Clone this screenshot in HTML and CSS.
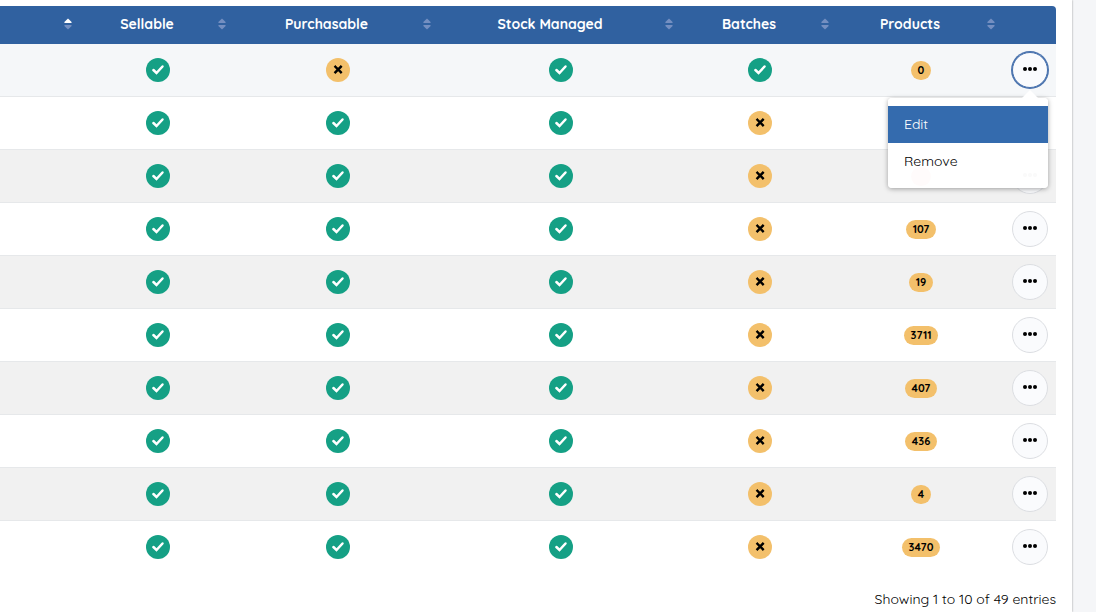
FILE: index.html
```html
<!DOCTYPE html>
<html lang="en">
  <head>
    <meta charset="UTF-8" />
    <meta name="viewport" content="width=device-width, initial-scale=1.0" />
    <title>Product Types</title>
    <link rel="stylesheet" href="styles.css">
  </head>
  <body>
    <!-- Icons shared by the table -->
    <svg class="icons" aria-hidden="true">
      <symbol id="check" viewBox="0 0 24 24">
        <path d="M7.4 12l3.1 3 6-6.5" fill="none" stroke="currentColor" stroke-width="2.5" stroke-linecap="round" />
      </symbol>
      <symbol id="cross" viewBox="0 0 24 24">
        <path d="M9.4 8.8l5.4 5.4M14.8 8.8l-5.4 5.4" fill="none" stroke="currentColor" stroke-width="2.4" stroke-linecap="square" />
      </symbol>
      <symbol id="dots" viewBox="0 0 14 4">
        <circle cx="2" cy="2" r="2" />
        <circle cx="7" cy="2" r="2" />
        <circle cx="12" cy="2" r="2" />
      </symbol>
      <symbol id="sort" viewBox="0 0 8 12">
        <path d="M4 .5L7.6 4q.4 1-.6 1H1Q0 5 .4 4z" />
        <path d="M4 11.5L.4 8Q0 7 1 7h6q1 0 .6 1z" />
      </symbol>
    </svg>

    <main class="panel">
      <table class="types">
        <colgroup>
          <col>
          <col class="col-sellable">
          <col class="col-purchasable">
          <col class="col-stock">
          <col class="col-batches">
          <col class="col-products">
          <col class="col-actions">
        </colgroup>
        <thead>
          <tr>
            <th aria-sort="ascending">
              <button class="sort" type="button" aria-label="Name">
                <span class="sort-label"></span>
                <svg class="sort-icon" viewBox="0 0 8 12">
                  <path class="sorted" d="M4 .5L7.6 4q.4 1-.6 1H1Q0 5 .4 4z" />
                  <path d="M4 11.5L.4 8Q0 7 1 7h6q1 0 .6 1z" />
                </svg>
              </button>
            </th>
            <th><button class="sort" type="button"><span class="sort-label">Sellable</span><svg class="sort-icon"><use href="#sort" /></svg></button></th>
            <th><button class="sort" type="button"><span class="sort-label">Purchasable</span><svg class="sort-icon"><use href="#sort" /></svg></button></th>
            <th><button class="sort" type="button"><span class="sort-label">Stock Managed</span><svg class="sort-icon"><use href="#sort" /></svg></button></th>
            <th><button class="sort" type="button"><span class="sort-label">Batches</span><svg class="sort-icon"><use href="#sort" /></svg></button></th>
            <th><button class="sort" type="button"><span class="sort-label">Products</span><svg class="sort-icon"><use href="#sort" /></svg></button></th>
            <th></th>
          </tr>
        </thead>
        <tbody id="typeRows"></tbody>
      </table>
      <p class="info">Showing 1 to 10 of 49 entries</p>
    </main>

    <script>
      // sellable, purchasable, stock managed, batches, products
      const types = [
        { flags: [true, false, true, true], products: "0", open: true },
        { flags: [true, true, true, false], products: null },
        { flags: [true, true, true, false], products: "", danger: true },
        { flags: [true, true, true, false], products: "107" },
        { flags: [true, true, true, false], products: "19" },
        { flags: [true, true, true, false], products: "3711" },
        { flags: [true, true, true, false], products: "407" },
        { flags: [true, true, true, false], products: "436" },
        { flags: [true, true, true, false], products: "4" },
        { flags: [true, true, true, false], products: "3470" },
      ];

      const flagCell = (on) =>
        `<td><svg class="flag ${on ? "yes" : "no"}"><use href="#${on ? "check" : "cross"}" /></svg></td>`;

      const menu = `
        <div class="menu" role="menu">
          <button class="menu-item active" type="button" role="menuitem">Edit</button>
          <button class="menu-item" type="button" role="menuitem">Remove</button>
        </div>`;

      // Build the table rows
      document.getElementById("typeRows").innerHTML = types
        .map((type) => {
          const badge =
            type.products === null
              ? ""
              : `<span class="badge ${type.danger ? "danger" : ""}">${type.products}</span>`;
          return `
            <tr class="${type.open ? "selected" : ""}">
              <td></td>
              ${type.flags.map(flagCell).join("")}
              <td>${badge}</td>
              <td>
                <div class="actions">
                  <button class="more ${type.open ? "open" : ""}" type="button" aria-label="Actions"><svg class="dots"><use href="#dots" /></svg></button>
                  ${type.open ? menu : ""}
                </div>
              </td>
            </tr>`;
        })
        .join("");
    </script>
  </body>
</html>
```
FILE: styles.css
```css
* {
  box-sizing: border-box;
}
body {
  margin: 0;
  padding-right: 24px;
  background-color: #f5f6f8;
  color: #000;
  font-family: Quicksand, Lato, sans-serif;
  font-size: 14px;
}
button {
  font: inherit;
  color: inherit;
  border: none;
  cursor: pointer;
}
.icons {
  display: none;
}
.panel {
  min-height: 100vh;
  padding: 6px 16px 0 0;
  background-color: #fff;
  box-shadow: 0 0 2px rgba(0, 0, 0, 0.4);
}

/* Table */
.types {
  width: 100%;
  table-layout: fixed;
  border-collapse: separate;
  border-spacing: 0;
}
.col-sellable {
  width: 154px;
}
.col-purchasable {
  width: 205px;
}
.col-stock {
  width: 242px;
}
.col-batches {
  width: 156px;
}
.col-products {
  width: 166px;
}
.col-actions {
  width: 52px;
}
th {
  height: 38px;
  padding: 0;
  background-color: #3061a0;
  color: #fff;
}
th:last-child {
  border-top-right-radius: 4px;
}
.sort {
  display: flex;
  align-items: center;
  gap: 5px;
  width: 100%;
  padding: 0 9px 2px 0;
  background: none;
  line-height: 20px;
}
.sort-label {
  flex: 1;
}
.sort-icon {
  width: 8px;
  height: 12px;
  fill: #748fc1;
}
.sorted {
  fill: #fff;
}
td {
  height: 53px;
  padding: 0;
  border-bottom: 1px solid #e6e8ea;
  text-align: center;
  vertical-align: middle;
}
tbody tr:nth-child(odd) {
  background-color: #f1f1f1;
}
tbody tr.selected {
  background-color: #f5f7f9;
}
tbody tr:last-child td {
  border-bottom-color: transparent;
}

/* Yes / no marks */
.flag {
  display: block;
  width: 24px;
  height: 24px;
  margin: 0 auto;
  border-radius: 50%;
}
.yes {
  background-color: #15a085;
  color: #fff;
}
.no {
  background-color: #f3c06b;
  color: #000;
}

.badge {
  display: block;
  width: fit-content;
  min-width: 20px;
  min-height: 19px;
  margin: 0 auto;
  padding: 0 7px;
  border-radius: 10px;
  background-color: #f3c06b;
  font-size: 11px;
  font-weight: bold;
  line-height: 19px;
}
.danger {
  background-color: #e74c3c;
}

/* Row actions */
.actions {
  position: relative;
  width: 36px;
  margin: 0 auto;
}
.more {
  display: flex;
  justify-content: center;
  align-items: center;
  width: 36px;
  height: 36px;
  padding: 0 0 2px;
  border: 1px solid #dcdee2;
  border-radius: 50%;
  background-color: #fafbfd;
}
.more.open {
  border-color: #4a73ae;
  box-shadow: 0 0 0 1px #4a73ae;
}
.dots {
  width: 14px;
  height: 4px;
}
.menu {
  position: absolute;
  top: 46px;
  right: 0;
  z-index: 1;
  width: 160px;
  padding: 8px 0;
  border-radius: 4px;
  background-color: rgba(255, 255, 255, 0.98);
  box-shadow: 0 1px 5px rgba(0, 0, 0, 0.35);
}
.menu::before {
  content: "";
  position: absolute;
  right: 10px;
  bottom: 100%;
  border: 8px solid transparent;
  border-top-width: 0;
  border-bottom-color: #fff;
}
.menu-item {
  display: block;
  width: 100%;
  height: 37px;
  padding: 0 16px 2px;
  background: none;
  text-align: left;
}
.menu-item.active {
  background-color: #346bae;
  color: #fff;
}

.info {
  margin: 0;
  padding: 15px 0 3px;
  line-height: 20px;
  text-align: right;
}
```
